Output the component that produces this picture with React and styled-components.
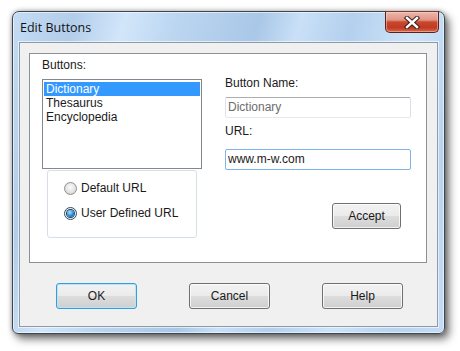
import React from "react";
import styled, { createGlobalStyle, css } from "styled-components";

const GlobalStyle = createGlobalStyle`
  html, body { margin: 0; padding: 0; background: #ffffff; }
  body {
    width: 460px;
    height: 351px;
    overflow: hidden;
    font-family: "Liberation Sans", Arial, sans-serif;
    font-size: 12px;
    color: #000;
  }
`;

const Page = styled.div`
  padding: 11px 0 0 12px;
`;

const Window = styled.div`
  box-sizing: border-box;
  width: 433px;
  height: 323px;
  border: 1px solid #3d4752;
  border-radius: 7px 7px 6px 6px;
  padding: 0 6px 6px 6px;
  display: flex;
  flex-direction: column;
  background:
    linear-gradient(105deg,
      #c4dcf4 0%, #b2cdea 12%, #d2e6fa 22%, #bcd6f1 32%,
      #a9c7e7 48%, #c9e0f7 56%, #b4d0ee 66%, #cde3f9 78%,
      #b9d4f0 90%, #c4dcf5 100%);
  box-shadow:
    inset 0 0 0 1px rgba(255, 255, 255, 0.55),
    4px 5px 9px rgba(0, 0, 0, 0.55),
    0 0 5px rgba(0, 0, 0, 0.35);
`;

const TitleBar = styled.div`
  height: 30px;
  display: flex;
  align-items: center;
  justify-content: space-between;
  padding-left: 1px;
`;

const Title = styled.span`
  font-family: "Open Sans", "Noto Sans", sans-serif;
  font-size: 12.5px;
  color: #111;
  margin-top: 1px;
`;

const CloseButton = styled.div`
  align-self: flex-start;
  box-sizing: border-box;
  width: 54px;
  height: 22px;
  margin-top: -1px;
  margin-right: -1px;
  border: 1px solid #5b2218;
  border-top-color: #7a3a30;
  border-radius: 0 0 5px 5px;
  display: flex;
  align-items: center;
  justify-content: center;
  background: linear-gradient(
    to bottom,
    #ecb7aa 0%, #e09585 40%, #c9482f 50%, #c13a21 78%, #d9694c 100%
  );
  box-shadow: inset 0 0 0 1px rgba(255, 225, 215, 0.45);
`;

const Client = styled.div`
  box-sizing: border-box;
  height: 285px;
  background: #f0f0f0;
  border: 1px solid #8d9aa8;
  box-shadow: 0 0 0 1px rgba(255, 255, 255, 0.6);
  display: flex;
  flex-direction: column;
`;

const Panel = styled.div`
  box-sizing: border-box;
  height: 210px;
  margin: 10px 10px 0 9px;
  border: 1px solid #8c9097;
  background: #ffffff;
  display: grid;
  grid-template-columns: 160px 186px;
  column-gap: 23px;
  padding-left: 12px;
  align-items: start;
`;

const Column = styled.div`
  display: flex;
  flex-direction: column;
  padding-top: ${(p) => p.$top}px;
`;

const Label = styled.div`
  line-height: 14px;
  height: 14px;
  color: #1a1a1a;
  margin-top: ${(p) => p.$mt || 0}px;
`;

const ListBox = styled.div`
  box-sizing: border-box;
  height: 90px;
  margin-top: 7px;
  border: 1px solid #828790;
  padding: 2px 1px;
`;

const ListRow = styled.div`
  height: 14px;
  line-height: 14px;
  padding-left: 2px;
  color: #1a1a1a;
  ${(p) =>
    p.$selected &&
    css`
      background: #3399ff;
      color: #ffffff;
    `}
`;

const RadioGroup = styled.div`
  box-sizing: border-box;
  width: 150px;
  height: 68px;
  margin: 1px 0 0 5px;
  border: 1px solid #d5dfe5;
  border-radius: 3px;
  padding: 10px 0 0 16px;
  display: flex;
  flex-direction: column;
  gap: 11px;
`;

const RadioRow = styled.div`
  display: flex;
  align-items: center;
  height: 14px;
  gap: 4px;
  color: #1a1a1a;
`;

const RadioCircle = styled.span`
  box-sizing: border-box;
  width: 13px;
  height: 13px;
  border-radius: 50%;
  display: flex;
  align-items: center;
  justify-content: center;
  border: 1px solid ${(p) => (p.$checked ? "#2b4c68" : "#8e8f8f")};
  background: ${(p) =>
    p.$checked
      ? "#f4f4f4"
      : "radial-gradient(circle at 50% 40%, #fbfbfb 0%, #e4e4e4 55%, #c4c4c4 100%)"};
`;

const RadioDot = styled.span`
  width: 7px;
  height: 7px;
  border-radius: 50%;
  background: radial-gradient(circle at 40% 35%, #a8e6ff 0%, #2a8ad8 55%, #0b4a8c 100%);
  box-shadow: 0 0 0 1px #1d3f5e;
`;

const TextInput = styled.div`
  box-sizing: border-box;
  height: 21px;
  margin-top: ${(p) => p.$mt}px;
  border: 1px solid ${(p) => (p.$focused ? "#7eb4ea" : "#abadb3")};
  ${(p) => !p.$focused && css`border-color: #abadb3 #dbdfe6 #e3e9ef #e2e3ea;`}
  border-radius: 2px;
  padding-left: 2px;
  line-height: 19px;
  background: #fff;
  color: ${(p) => (p.$dim ? "#6d6d6d" : "#1a1a1a")};
`;

const PushButton = styled.button`
  box-sizing: border-box;
  width: ${(p) => p.$w}px;
  height: 26px;
  padding: 0;
  margin: 0;
  font-family: "Liberation Sans", Arial, sans-serif;
  font-size: 12px;
  color: #1a1a1a;
  border: 1px solid ${(p) => (p.$default ? "#3c9ad8" : "#707070")};
  border-radius: 3px;
  background: linear-gradient(
    to bottom,
    #f2f2f2 0%, #ebebeb 49%, #dddddd 51%, #cfcfcf 100%
  );
  box-shadow: inset 0 0 0 1px
    ${(p) => (p.$default ? "#b7e6fb" : "rgba(255,255,255,0.75)")};
`;

const AcceptButton = styled(PushButton)`
  margin: 33px 0 0 107px;
`;

const Footer = styled.div`
  display: flex;
  gap: 52px;
  padding: 20px 0 0 36px;
`;

function CloseIcon() {
  return (
    <svg width="16" height="13" viewBox="0 0 16 13">
      <path d="M3 2 L13 11 M13 2 L3 11" stroke="#3b1f1a" strokeWidth="4.4" strokeLinecap="square" />
      <path d="M3 2 L13 11 M13 2 L3 11" stroke="#ffffff" strokeWidth="2.4" strokeLinecap="square" />
    </svg>
  );
}

export default function App() {
  return (
    <>
      <GlobalStyle />
      <Page>
        <Window>
          <TitleBar>
            <Title>Edit Buttons</Title>
            <CloseButton>
              <CloseIcon />
            </CloseButton>
          </TitleBar>
          <Client>
            <Panel>
              <Column $top={4}>
                <Label>Buttons:</Label>
                <ListBox>
                  <ListRow $selected>Dictionary</ListRow>
                  <ListRow>Thesaurus</ListRow>
                  <ListRow>Encyclopedia</ListRow>
                </ListBox>
                <RadioGroup>
                  <RadioRow>
                    <RadioCircle />
                    Default URL
                  </RadioRow>
                  <RadioRow>
                    <RadioCircle $checked>
                      <RadioDot />
                    </RadioCircle>
                    User Defined URL
                  </RadioRow>
                </RadioGroup>
              </Column>
              <Column $top={22}>
                <Label>Button Name:</Label>
                <TextInput $mt={7} $dim>Dictionary</TextInput>
                <Label $mt={6}>URL:</Label>
                <TextInput $mt={11} $focused>www.m-w.com</TextInput>
                <AcceptButton $w={69}>Accept</AcceptButton>
              </Column>
            </Panel>
            <Footer>
              <PushButton $w={81} $default>OK</PushButton>
              <PushButton $w={81}>Cancel</PushButton>
              <PushButton $w={81}>Help</PushButton>
            </Footer>
          </Client>
        </Window>
      </Page>
    </>
  );
}
